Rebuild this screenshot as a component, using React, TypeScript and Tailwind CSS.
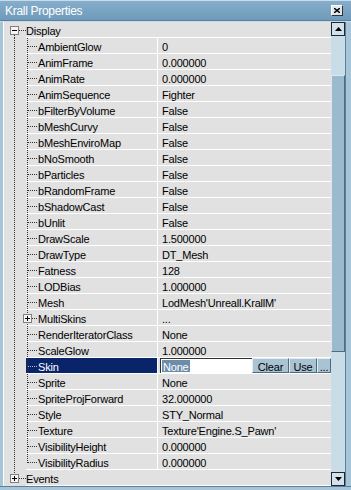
import React from "react";

type Prop = { name: string; value: string; plus?: boolean; selected?: boolean; last?: boolean };

// Krall's Display properties, in order
const props: Prop[] = [
  { name: "AmbientGlow", value: "0" },
  { name: "AnimFrame", value: "0.000000" },
  { name: "AnimRate", value: "0.000000" },
  { name: "AnimSequence", value: "Fighter" },
  { name: "bFilterByVolume", value: "False" },
  { name: "bMeshCurvy", value: "False" },
  { name: "bMeshEnviroMap", value: "False" },
  { name: "bNoSmooth", value: "False" },
  { name: "bParticles", value: "False" },
  { name: "bRandomFrame", value: "False" },
  { name: "bShadowCast", value: "False" },
  { name: "bUnlit", value: "False" },
  { name: "DrawScale", value: "1.500000" },
  { name: "DrawType", value: "DT_Mesh" },
  { name: "Fatness", value: "128" },
  { name: "LODBias", value: "1.000000" },
  { name: "Mesh", value: "LodMesh'Unreall.KrallM'" },
  { name: "MultiSkins", value: "...", plus: true },
  { name: "RenderIteratorClass", value: "None" },
  { name: "ScaleGlow", value: "1.000000" },
  { name: "Skin", value: "None", selected: true },
  { name: "Sprite", value: "None" },
  { name: "SpriteProjForward", value: "32.000000" },
  { name: "Style", value: "STY_Normal" },
  { name: "Texture", value: "Texture'Engine.S_Pawn'" },
  { name: "VisibilityHeight", value: "0.000000" },
  { name: "VisibilityRadius", value: "0.000000", last: true },
];

const DOT = "#333";

function Box({ x, open }: { x: number; open: boolean }) {
  return (
    <g shapeRendering="crispEdges">
      <rect x={x + 0.5} y={4.5} width={8} height={8} fill="#f4f4f4" stroke="#7f7f7f" />
      <line x1={x + 2} y1={8.5} x2={x + 7} y2={8.5} stroke="#000" />
      {!open && <line x1={x + 4.5} y1={6} x2={x + 4.5} y2={11} stroke="#000" />}
    </g>
  );
}

function CategoryTree({ open, last }: { open: boolean; last?: boolean }) {
  return (
    <svg width={34} height={16} className="shrink-0 block">
      <g stroke={DOT} strokeDasharray="1 1" shapeRendering="crispEdges">
        {open && <line x1={10.5} y1={13} x2={10.5} y2={16} />}
        {last && <line x1={10.5} y1={0} x2={10.5} y2={4} />}
        <line x1={15} y1={8.5} x2={22} y2={8.5} />
      </g>
      <line x1={22} y1={15.5} x2={34} y2={15.5} stroke="#fff" shapeRendering="crispEdges" />
      <Box x={6} open={open} />
    </svg>
  );
}

function ChildTree({ p }: { p: Prop }) {
  return (
    <svg width={34} height={16} className="shrink-0 block">
      {p.selected && <rect x={22} y={0} width={12} height={15} fill="#0a246a" />}
      <g stroke={DOT} strokeDasharray="1 1" shapeRendering="crispEdges">
        <line x1={10.5} y1={0} x2={10.5} y2={16} />
        <line x1={23.5} y1={0} x2={23.5} y2={p.last ? 9 : 16} />
      </g>
      <line
        x1={p.plus ? 28 : 24}
        y1={8.5}
        x2={34}
        y2={8.5}
        stroke={p.selected ? "#b8b8c8" : DOT}
        strokeDasharray="1 1"
        shapeRendering="crispEdges"
      />
      <line x1={22} y1={15.5} x2={34} y2={15.5} stroke="#fff" shapeRendering="crispEdges" />
      {p.plus && <Box x={19} open={false} />}
    </svg>
  );
}

function EditValue() {
  return (
    <div className="flex h-[15px] flex-1 items-stretch pl-[2px]">
      <div className="flex w-[92px] items-start border-l border-t border-[#303030] bg-white">
        <span className="ml-[1px] mt-[1px] h-[12px] bg-[#6b8cab] px-px leading-[14px] text-white">None</span>
      </div>
      <button className="w-[37px] border border-t-[#e0ecf4] border-l-[#e0ecf4] border-r-[#4e6a7e] border-b-[#4e6a7e] bg-[#a9c3d3] leading-[16px]">
        Clear
      </button>
      <button className="w-[28px] border border-t-[#e0ecf4] border-l-[#e0ecf4] border-r-[#4e6a7e] border-b-[#4e6a7e] bg-[#a9c3d3] leading-[16px]">
        Use
      </button>
      <button className="w-[14px] border border-t-[#e0ecf4] border-l-[#e0ecf4] border-r-[#4e6a7e] border-b-[#4e6a7e] bg-[#a9c3d3] leading-[16px]">
        ...
      </button>
    </div>
  );
}

function PropRow({ p }: { p: Prop }) {
  return (
    <div className="flex h-[16px]">
      <ChildTree p={p} />
      <div
        className={
          "h-[16px] w-[119px] border-b border-white leading-[18px] " +
          (p.selected ? "bg-[#0a246a] text-white" : "")
        }
      >
        {p.name}
      </div>
      <div className="w-px bg-white" />
      {p.selected ? (
        <div className="flex h-[16px] w-[173px] border-b border-white">
          <EditValue />
        </div>
      ) : (
        <div className="h-[16px] w-[173px] border-b border-white pl-[4px] leading-[18px]">{p.value}</div>
      )}
    </div>
  );
}

function CategoryRow({ label, open, last }: { label: string; open: boolean; last?: boolean }) {
  return (
    <div className="flex h-[16px]">
      <CategoryTree open={open} last={last} />
      <div className="h-[16px] flex-1 border-b border-white pl-[-12px] leading-[18px]">
        <span className="-ml-[12px]">{label}</span>
      </div>
    </div>
  );
}

function Arrow({ up }: { up: boolean }) {
  return (
    <div className="flex h-[14px] w-[14px] items-center justify-center border border-[#1c2833] bg-[#d3e1ea]">
      <svg width={7} height={4} className="block">
        {up ? <path d="M3.5 0 L7 4 L0 4 Z" fill="#000" /> : <path d="M0 0 L7 0 L3.5 4 Z" fill="#000" />}
      </svg>
    </div>
  );
}

export default function App() {
  return (
    <div className="h-[490px] w-[351px] bg-[#a7c5d9] font-['Liberation_Sans',Arial,sans-serif] text-[11px] tracking-[-0.2px] text-black">
      {/* title bar */}
      <div className="flex h-[20px] items-center justify-between border-t border-[#c6dcea] bg-gradient-to-b from-[#86aecb] to-[#6f9aba] pl-[5px] pr-[8px]">
        <span className="text-[12px] tracking-[-0.3px] text-white">Krall Properties</span>
        <div className="flex h-[11px] w-[12px] items-center justify-center border border-t-white border-l-white border-r-[#333] border-b-[#333] bg-[#dfe7ec]">
          <svg width={6} height={5} className="block">
            <path d="M0 0 L6 5 M6 0 L0 5" stroke="#000" strokeWidth={1.4} />
          </svg>
        </div>
      </div>
      <div className="h-[2px] border-t border-[#5d7f97] bg-[#c7dbe8]" />
      <div className="flex h-[464px]">
        <div className="w-[4px] border-r border-[#ffffff] bg-[#a7c5d9]" />
        <div className="h-[464px] w-[327px] overflow-hidden bg-[#e1e1e1]">
          <CategoryRow label="Display" open />
          {props.map((p) => (
            <PropRow key={p.name} p={p} />
          ))}
          <CategoryRow label="Events" open={false} last />
        </div>
        {/* scrollbar */}
        <div className="flex w-[14px] flex-col bg-[#c9dde8]">
          <Arrow up />
          <div className="h-[39px]" />
          <div className="h-[277px] border border-l-[#dbe8f0] border-t-[#dbe8f0] border-r-[#4f6c80] border-b-[#4f6c80] bg-[#9bbacd]" />
          <div className="flex-1" />
          <Arrow up={false} />
        </div>
        <div className="w-[5px] border-l border-[#5d7f97] bg-[#a7c5d9]" />
      </div>
      <div className="h-[4px] border-t border-[#5d7f97] bg-[#a7c5d9]" />
    </div>
  );
}
